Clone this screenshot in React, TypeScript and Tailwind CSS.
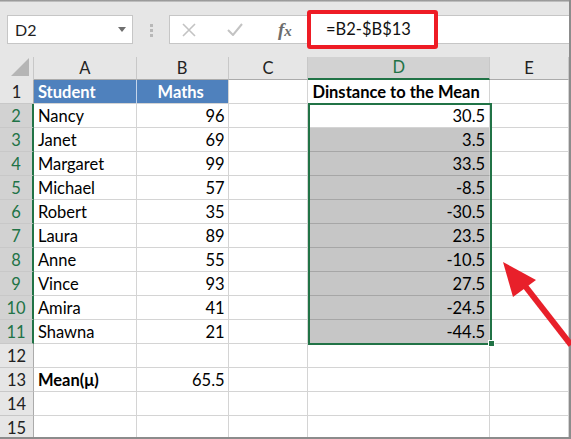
import React from 'react';

const FONT = { fontFamily: 'Lato, "Open Sans", "Liberation Sans", sans-serif' };

const COLS = ['A', 'B', 'C', 'D', 'E'];
const COL_W = ['w-[103px]', 'w-[92px]', 'w-[80px]', 'w-[182px]', 'w-[79px]'];

type Row = { n: number; a?: string; b?: string; d?: string };

const ROWS: Row[] = [
  { n: 1 },
  { n: 2, a: 'Nancy', b: '96', d: '30.5' },
  { n: 3, a: 'Janet', b: '69', d: '3.5' },
  { n: 4, a: 'Margaret', b: '99', d: '33.5' },
  { n: 5, a: 'Michael', b: '57', d: '-8.5' },
  { n: 6, a: 'Robert', b: '35', d: '-30.5' },
  { n: 7, a: 'Laura', b: '89', d: '23.5' },
  { n: 8, a: 'Anne', b: '55', d: '-10.5' },
  { n: 9, a: 'Vince', b: '93', d: '27.5' },
  { n: 10, a: 'Amira', b: '41', d: '-24.5' },
  { n: 11, a: 'Shawna', b: '21', d: '-44.5' },
  { n: 12 },
  { n: 13 },
  { n: 14 },
  { n: 15 },
];

function FormulaBar() {
  return (
    <div className="relative h-[57px] shrink-0 bg-[#e6e6e6]">
      <div className="h-[2px] bg-gradient-to-b from-[#8a8a8a] to-[#cfcfcf]" />
      <div className="flex items-start pt-[13px]">
        {/* name box */}
        <div className="ml-[7px] flex h-[29px] w-[126px] items-center justify-between border border-[#c6c6c6] bg-white pl-[7px] pr-[6px] text-[16px] text-[#222]">
          <span>D2</span>
          <svg width="8" height="5" viewBox="0 0 8 5">
            <path d="M0 0h8L4 5z" fill="#6f6f6f" />
          </svg>
        </div>
        {/* grip dots */}
        <div className="ml-[17px] mt-[9px] flex flex-col gap-[2px]">
          <span className="block h-[3px] w-[3px] bg-[#b8b8b8]" />
          <span className="block h-[3px] w-[3px] bg-[#b8b8b8]" />
          <span className="block h-[3px] w-[3px] bg-[#b8b8b8]" />
        </div>
        {/* formula input */}
        <div className="ml-[16px] flex h-[29px] flex-1 items-center border-y border-l border-[#c6c6c6] bg-white">
          <svg className="ml-[12px]" width="14" height="14" viewBox="0 0 14 14">
            <path d="M1 1l12 12M13 1L1 13" stroke="#c3c3c3" strokeWidth="1.6" />
          </svg>
          <svg className="ml-[31px]" width="16" height="13" viewBox="0 0 16 13">
            <path d="M1 7l5 5L15 1" stroke="#c3c3c3" strokeWidth="2" fill="none" />
          </svg>
          <span
            className="ml-[35px] text-[19px] font-bold italic leading-none text-[#6d6d6d]"
            style={{ fontFamily: '"Liberation Serif", serif' }}
          >
            f<span className="text-[15px]">x</span>
          </span>
        </div>
      </div>
      {/* highlighted formula */}
      <div className="absolute left-[307px] top-[10px] flex h-[39px] w-[131px] items-center rounded-[3px] border-[4px] border-[#ee1c25] bg-white pl-[15px] text-[16.5px] text-[#111]">
        =B2-$B$13
      </div>
    </div>
  );
}

function HeaderRow() {
  return (
    <div className="flex h-[23px]">
      <div className="relative h-full w-[34px] border-r border-[#c8c8c8] bg-[#e6e6e6]">
        <svg className="absolute bottom-[4px] right-[4px]" width="18" height="18" viewBox="0 0 18 18">
          <path d="M18 0V18H0z" fill="#b5b5b5" />
        </svg>
      </div>
      {COLS.map((c, i) => {
        const sel = c === 'D';
        return (
          <div
            key={c}
            className={`${COL_W[i]} flex h-full items-center justify-center border-r text-[16.5px] ${
              sel
                ? 'border-[#c8c8c8] border-b-2 border-b-[#217346] bg-[#d2d2d2] text-[#217346]'
                : 'border-[#c8c8c8] border-b border-b-[#ababab] bg-[#e6e6e6] text-[#222]'
            }`}
          >
            {c}
          </div>
        );
      })}
    </div>
  );
}

function GridRow({ row }: { row: Row }) {
  const inSel = row.n >= 2 && row.n <= 11;
  const cell = 'flex h-full items-end pb-[1px] border-r border-b border-[#d4d4d4] text-[16.5px] text-black leading-[20px]';
  const isHead = row.n === 1;
  const isMean = row.n === 13;
  return (
    <div className="flex h-[24px]">
      <div
        className={`flex h-full w-[34px] items-end justify-center pb-[1px] text-[16.5px] leading-[20px] border-b border-[#c8c8c8] ${
          inSel
            ? 'border-r-2 border-r-[#217346] bg-[#d2d2d2] text-[#217346]'
            : 'border-r border-r-[#ababab] bg-[#e6e6e6] text-[#222]'
        }`}
      >
        {row.n}
      </div>
      {/* A */}
      <div
        className={`${cell} w-[103px] pl-[4px] ${
          isHead ? 'bg-[#4f81bd] font-bold text-white border-r-[#c5d5ea]' : ''
        } ${isMean ? 'font-bold' : ''}`}
      >
        {isHead ? 'Student' : isMean ? 'Mean(μ)' : row.a}
      </div>
      {/* B */}
      <div
        className={`${cell} w-[92px] pr-[3px] ${
          isHead ? 'justify-center bg-[#4f81bd] font-bold text-white' : 'justify-end'
        }`}
      >
        {isHead ? 'Maths' : isMean ? '65.5' : row.b}
      </div>
      {/* C */}
      <div className={`${cell} w-[80px]`} />
      {/* D */}
      <div
        className={`${cell} w-[182px] pr-[4px] ${
          isHead ? 'justify-start pl-[4px] font-bold' : 'justify-end'
        } ${inSel && row.n > 2 ? 'bg-[#c6c6c6] border-b-[#a6a6a6]' : ''}`}
      >
        {isHead ? 'Dinstance to the Mean' : row.d}
      </div>
      {/* E */}
      <div className={`${cell} w-[79px]`} />
    </div>
  );
}

export default function App() {
  return (
    <div className="h-[439px] w-[571px] overflow-hidden bg-white" style={FONT}>
      <div className="relative flex h-[439px] w-[571px] flex-col border-r-2 border-[#8c8c8c]">
        <FormulaBar />
        <div className="relative flex-1">
          <HeaderRow />
          {ROWS.map(r => (
            <GridRow key={r.n} row={r} />
          ))}
          {/* selection D2:D11 */}
          <div className="pointer-events-none absolute left-[308px] top-[46px] h-[242px] w-[184px] border-2 border-[#217346]" />
          <div className="pointer-events-none absolute left-[488px] top-[283px] h-[7px] w-[7px] border border-white bg-[#217346]" />
          {/* arrow */}
          <svg className="pointer-events-none absolute left-0 top-0" width="571" height="382" viewBox="0 57 571 382">
            <path d="M571 345 L522 282" stroke="#e8202a" strokeWidth="6" />
            <path d="M503 262 L536 280 L513 297 Z" fill="#e8202a" />
          </svg>
        </div>
        <div className="absolute bottom-0 left-0 h-[2px] w-full bg-[#8c8c8c]" />
      </div>
    </div>
  );
}
